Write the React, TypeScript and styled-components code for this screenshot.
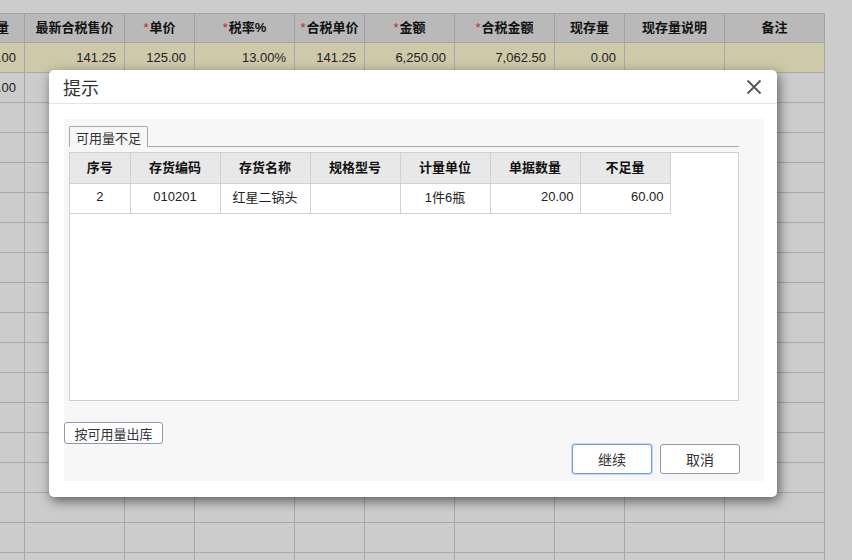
import React from "react";
import styled, { createGlobalStyle } from "styled-components";

const GlobalStyle = createGlobalStyle`
  html, body {
    margin: 0;
    padding: 0;
  }
  body {
    font-family: "Liberation Sans", "Noto Sans CJK SC", sans-serif;
    font-size: 13px;
    color: #222;
  }
  th, td {
    box-sizing: border-box;
  }
`;

const Page = styled.div`
  position: relative;
  width: 852px;
  height: 560px;
  background: #cccccc;
  overflow: hidden;
`;

const GridWrap = styled.div`
  padding-top: 13px;
  overflow: hidden;
`;

const Grid = styled.table`
  border-collapse: collapse;
  table-layout: fixed;
  margin-left: -46px;
  width: 870px;
`;

const GridTh = styled.th<{ width: number }>`
  width: ${(p) => p.width}px;
  height: 29px;
  padding: 0 0 3px;
  background: #b9b9b9;
  border: 1px solid #a3a3a3;
  font-weight: bold;
  font-size: 13px;
  color: #111;
  text-align: center;
  white-space: nowrap;
`;

const Star = styled.span`
  color: #c8232c;
  font-weight: normal;
  margin-right: 1px;
`;

const GridRow = styled.tr<{ selected?: boolean }>`
  background: ${(p) => (p.selected ? "#cec9a9" : "#cccccc")};
`;

const GridTd = styled.td`
  height: 30px;
  padding: 0 8px 1px;
  border: 1px solid #a8a8a8;
  text-align: right;
  font-size: 13px;
  color: #222;
  white-space: nowrap;
  overflow: hidden;
`;

const Dialog = styled.div`
  position: absolute;
  left: 49px;
  top: 70px;
  width: 728px;
  height: 427px;
  background: #fff;
  border-radius: 5px;
  box-shadow: 2px 4px 12px rgba(0, 0, 0, 0.55);
  display: flex;
  flex-direction: column;
`;

const DialogHeader = styled.div`
  height: 33px;
  display: flex;
  align-items: center;
  justify-content: space-between;
  padding: 0 14px;
  border-bottom: 1px solid #e4e4e4;
`;

const Title = styled.span`
  font-size: 18px;
  color: #333;
`;

const Close = styled.button`
  border: none;
  background: none;
  padding: 0;
  width: 18px;
  height: 18px;
  display: flex;
  align-items: center;
  justify-content: center;
  cursor: pointer;
`;

const DialogBody = styled.div`
  flex: 1;
  padding: 15px 13px 16px 15px;
  display: flex;
`;

const Panel = styled.div`
  flex: 1;
  background: #f7f7f7;
  padding-top: 7px;
  display: flex;
  flex-direction: column;
`;

const TabArea = styled.div`
  margin: 0 25px 0 5px;
`;

const TabStrip = styled.div`
  height: 20px;
  border-bottom: 1px solid #a9a9a9;
  display: flex;
  align-items: flex-end;
`;

const Tab = styled.div`
  height: 20px;
  padding: 0 6px;
  border: 1px solid #a9a9a9;
  border-bottom: none;
  border-radius: 2px 2px 0 0;
  background: #f7f7f7;
  margin-bottom: -1px;
  display: flex;
  align-items: center;
  font-size: 13px;
  color: #333;
`;

const TableBox = styled.div`
  margin-top: 5px;
  height: 247px;
  border: 1px solid #cfcfcf;
  background: #fff;
`;

const InnerTable = styled.table`
  border-collapse: collapse;
  table-layout: fixed;
  width: 600px;
`;

const InnerTh = styled.th<{ width: number }>`
  width: ${(p) => p.width}px;
  height: 30px;
  padding: 0 0 3px;
  background: #e8e8e8;
  border: 1px solid #d0d0d0;
  border-top: none;
  font-weight: bold;
  font-size: 13px;
  color: #111;
  text-align: center;
  &:first-child {
    border-left: none;
  }
`;

const InnerTd = styled.td<{ align: "center" | "right" }>`
  height: 30px;
  padding: 0 6px 3px;
  border: 1px solid #d0d0d0;
  text-align: ${(p) => p.align};
  font-size: 13px;
  color: #222;
  &:first-child {
    border-left: none;
  }
`;

const SideButton = styled.button`
  align-self: flex-start;
  margin-top: 21px;
  height: 22px;
  width: 99px;
  padding: 0;
  background: #fff;
  border: 1px solid #8c99ad;
  border-radius: 3px;
  font-family: inherit;
  font-size: 13px;
  color: #333;
`;

const Footer = styled.div`
  display: flex;
  justify-content: flex-end;
  gap: 8px;
  padding-right: 24px;
`;

const FooterButton = styled.button<{ primary?: boolean }>`
  width: 80px;
  height: 30px;
  padding: 0;
  background: #fff;
  border: 1px solid ${(p) => (p.primary ? "#6c9de6" : "#8c99ad")};
  box-shadow: ${(p) => (p.primary ? "0 0 0 1px rgba(108,157,230,0.35)" : "none")};
  border-radius: 3px;
  font-family: inherit;
  font-size: 14px;
  color: #333;
`;

const columns: { label: string; width: number; required?: boolean }[] = [
  { label: "现存量", width: 70 },
  { label: "最新合税售价", width: 100 },
  { label: "单价", width: 70, required: true },
  { label: "税率%", width: 100, required: true },
  { label: "合税单价", width: 70, required: true },
  { label: "金额", width: 90, required: true },
  { label: "合税金额", width: 100, required: true },
  { label: "现存量", width: 70 },
  { label: "现存量说明", width: 100 },
  { label: "备注", width: 100 },
];

const rows: string[][] = [
  ["1.00", "141.25", "125.00", "13.00%", "141.25", "6,250.00", "7,062.50", "0.00", "", ""],
  ["1.00", "", "", "", "", "", "", "", "", ""],
  ...Array.from({ length: 16 }, () => Array(10).fill("")),
];

const innerColumns = [
  { label: "序号", width: 60 },
  { label: "存货编码", width: 90 },
  { label: "存货名称", width: 90 },
  { label: "规格型号", width: 90 },
  { label: "计量单位", width: 90 },
  { label: "单据数量", width: 90 },
  { label: "不足量", width: 90 },
];

const shortage: { value: string; align: "center" | "right" }[] = [
  { value: "2", align: "center" },
  { value: "010201", align: "center" },
  { value: "红星二锅头", align: "center" },
  { value: "", align: "center" },
  { value: "1件6瓶", align: "center" },
  { value: "20.00", align: "right" },
  { value: "60.00", align: "right" },
];

const CloseIcon = () => (
  <svg width="16" height="16" viewBox="0 0 16 16">
    <path d="M1.5 1.5 L14.5 14.5 M14.5 1.5 L1.5 14.5" stroke="#555" strokeWidth="1.8" fill="none" />
  </svg>
);

export default function App() {
  return (
    <Page>
      <GlobalStyle />
      <GridWrap>
        <Grid>
          <thead>
            <tr>
              {columns.map((c, i) => (
                <GridTh key={i} width={c.width}>
                  {c.required && <Star>*</Star>}
                  {c.label}
                </GridTh>
              ))}
            </tr>
          </thead>
          <tbody>
            {rows.map((r, i) => (
              <GridRow key={i} selected={i === 0}>
                {r.map((v, j) => (
                  <GridTd key={j}>{v}</GridTd>
                ))}
              </GridRow>
            ))}
          </tbody>
        </Grid>
      </GridWrap>

      <Dialog>
        <DialogHeader>
          <Title>提示</Title>
          <Close>
            <CloseIcon />
          </Close>
        </DialogHeader>
        <DialogBody>
          <Panel>
            <TabArea>
              <TabStrip>
                <Tab>可用量不足</Tab>
              </TabStrip>
              <TableBox>
                <InnerTable>
                  <thead>
                    <tr>
                      {innerColumns.map((c) => (
                        <InnerTh key={c.label} width={c.width}>
                          {c.label}
                        </InnerTh>
                      ))}
                    </tr>
                  </thead>
                  <tbody>
                    <tr>
                      {shortage.map((c, i) => (
                        <InnerTd key={i} align={c.align}>
                          {c.value}
                        </InnerTd>
                      ))}
                    </tr>
                  </tbody>
                </InnerTable>
              </TableBox>
            </TabArea>
            <SideButton>按可用量出库</SideButton>
            <Footer>
              <FooterButton primary>继续</FooterButton>
              <FooterButton>取消</FooterButton>
            </Footer>
          </Panel>
        </DialogBody>
      </Dialog>
    </Page>
  );
}
